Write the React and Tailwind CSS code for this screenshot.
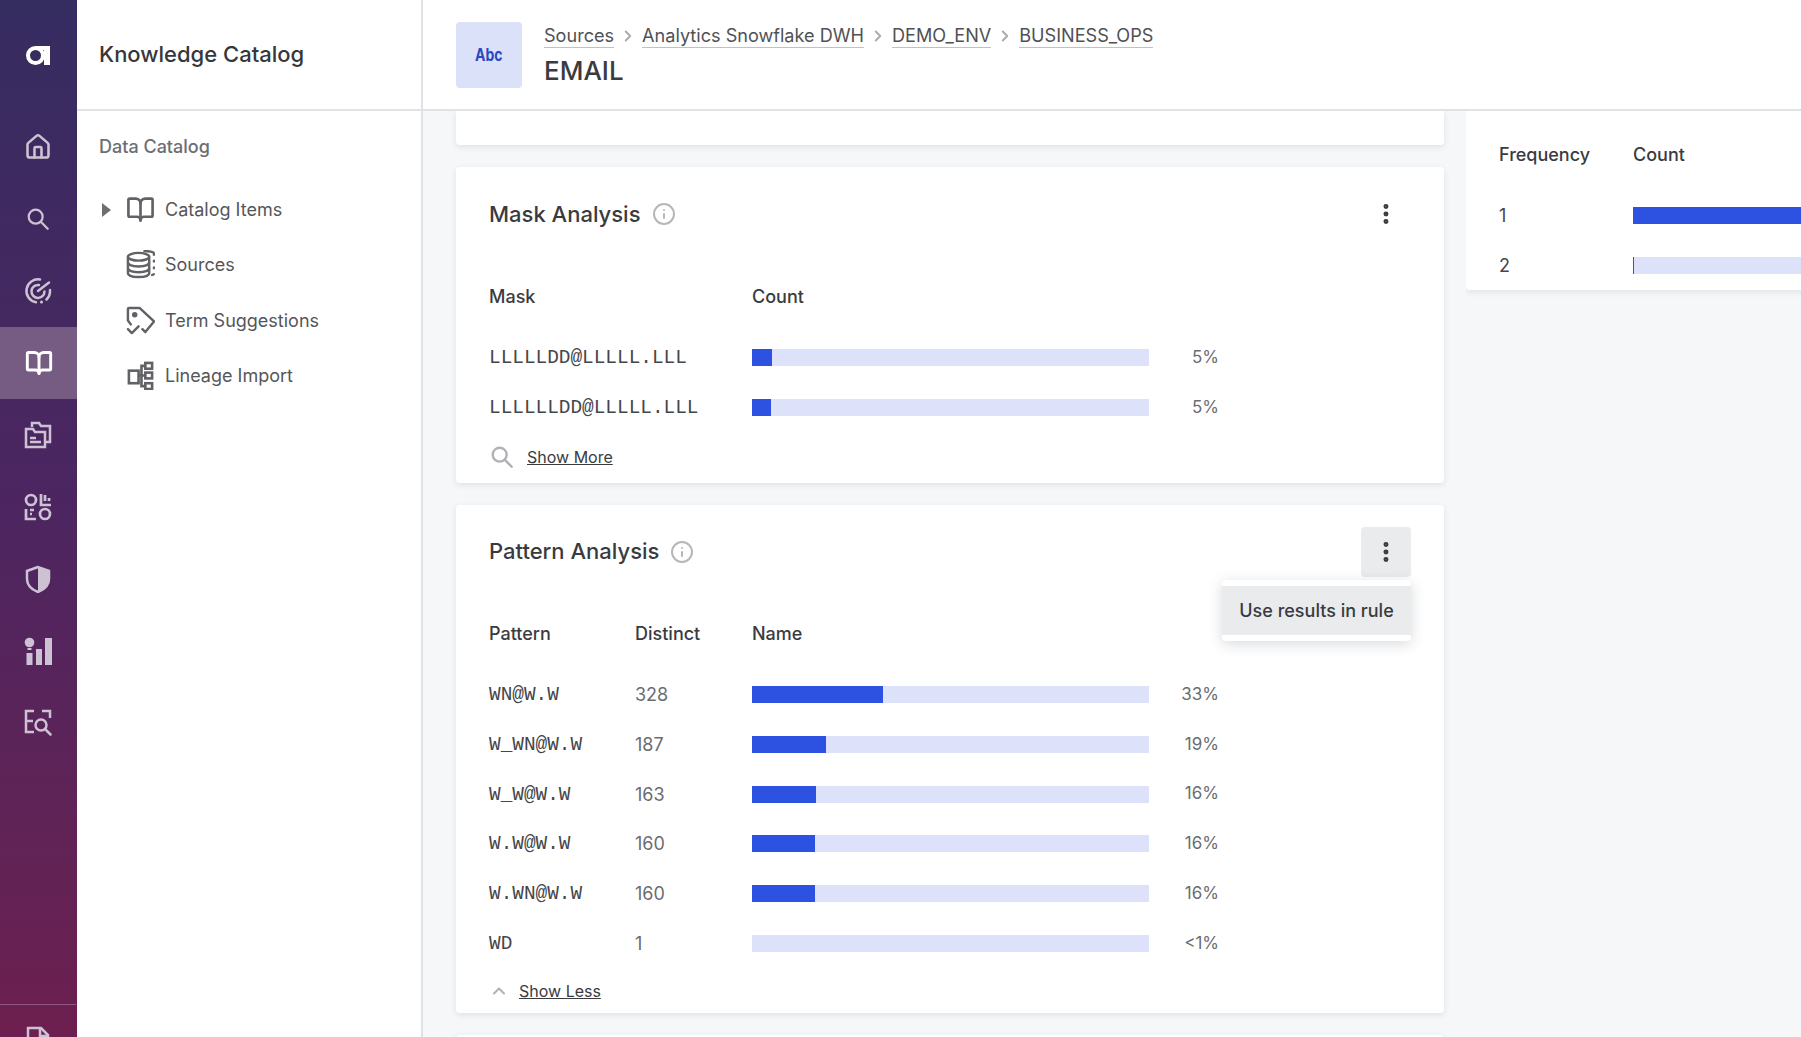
import React from 'react'
import { Home, BookOpen, ChevronRight, ChevronUp, EllipsisVertical, Info } from 'lucide-react'

const MONO = "font-['Liberation_Mono',monospace]"

function LogoIcon() {
  return (
    <svg width="24" height="19" viewBox="0 0 24 19" fill="none">
      <circle cx="9.500" cy="9.500" r="7.500" stroke="white" strokeWidth="4" />
      <path d="M9.500 0H24v19h-6V4H9.500z" fill="white" />
    </svg>
  )
}

function SearchIcon({ className, strokeWidth = 2.4 }) {
  return (
    <svg className={className} viewBox="0 0 28 28" fill="none" stroke="currentColor" strokeWidth={strokeWidth} strokeLinecap="round">
      <circle cx="11.500" cy="11.500" r="7.500" />
      <path d="m17 17 7.500 7.500" />
    </svg>
  )
}

function TargetIcon({ className }) {
  return (
    <svg className={className} viewBox="0 0 28 28" fill="none" stroke="currentColor" strokeWidth="2.500" strokeLinecap="round">
      <path d="M16 2.500A11.500 11.500 0 0 0 12 25.300" />
      <path d="M26 13c.300 3.500-1 7-3.500 9.500" />
      <path d="M15 8A6.500 6.500 0 1 0 20.500 14.500" />
      <path d="M14 14 25 5.500" />
      <circle cx="17.500" cy="25" r="1.500" fill="currentColor" stroke="none" />
    </svg>
  )
}

function FoldersIcon({ className }) {
  return (
    <svg className={className} viewBox="0 0 28 28" fill="none" stroke="currentColor" strokeWidth="2.500">
      <path d="M8 6V2h7l2 3h9v16h-5" />
      <path d="M2 8h7l2 3h10v15H2z" />
      <path d="M6 17h6M6 21h11" />
    </svg>
  )
}

function ShapesIcon({ className }) {
  return (
    <svg className={className} viewBox="0 0 28 28" fill="none" stroke="currentColor" strokeWidth="2.700">
      <circle cx="7" cy="7" r="5" />
      <circle cx="21" cy="21" r="5" />
      <path d="M17 1v11h10M21 2v6M25 5v3M2 16v10h10M6 17h4M6 21h2" />
    </svg>
  )
}

function ShieldIcon({ className }) {
  return (
    <svg className={className} viewBox="0 0 28 28" fill="none">
      <path d="M14 2 3 6v8c0 6 4.500 10.500 11 13 6.500-2.500 11-7 11-13V6z" stroke="currentColor" strokeWidth="2.500" />
      <path d="M14 2v25c6.500-2.500 11-7 11-13V6z" fill="currentColor" />
    </svg>
  )
}

function InsightIcon({ className }) {
  return (
    <svg className={className} viewBox="0 0 28 28" fill="currentColor">
      <circle cx="5.500" cy="5.500" r="4.800" />
      <path d="M3.500 11h4v2h-4zM2.500 16h6v12h-6zM12 12h6v16h-6zM21 1h7v27h-7z" />
    </svg>
  )
}

function EqSearchIcon({ className }) {
  return (
    <svg className={className} viewBox="0 0 28 28" fill="none" stroke="currentColor" strokeWidth="2.500">
      <path d="M10 2H2v21h8M2 12h7M18 2h8v7" />
      <circle cx="17" cy="16" r="5.500" />
      <path d="m21 20 5.500 5.500" strokeLinecap="round" />
    </svg>
  )
}

function DocIcon({ className }) {
  return (
    <svg className={className} viewBox="0 0 28 28" fill="none" stroke="currentColor" strokeWidth="2.500">
      <path d="M4 2h13l7 7v18H4z" />
      <path d="M16 2v8h8" />
    </svg>
  )
}

function StackIcon({ className }) {
  return (
    <svg className={className} viewBox="0 0 30 30" fill="none" stroke="currentColor" strokeWidth="2.500">
      <ellipse cx="13" cy="7" rx="11" ry="4" />
      <path d="M2 7v17c0 2.500 5 4 11 4s11-1.500 11-4V7" />
      <path d="M2 13c0 2.500 5 4 11 4s11-1.500 11-4M2 19c0 2.500 5 4 11 4s11-1.500 11-4" />
      <path d="M18 1c6 0 11 1 11 3v2M29 10v3M29 17v3M29 24c0 1-1 2-3 2" />
    </svg>
  )
}

function TagCheckIcon({ className }) {
  return (
    <svg className={className} viewBox="0 0 30 30" fill="none" stroke="currentColor" strokeWidth="2.500" strokeLinecap="round" strokeLinejoin="round">
      <path d="M5 19 2 15V3a1 1 0 0 1 1-1h11l15 14-9 11-3-3" />
      <circle cx="9" cy="9" r="1.600" fill="currentColor" />
      <path d="m2 24 4 4 7-7" />
    </svg>
  )
}

function LineageIcon({ className }) {
  return (
    <svg className={className} viewBox="0 0 30 30" fill="none" stroke="currentColor" strokeWidth="2.700">
      <rect x="3" y="10" width="10" height="13" />
      <rect x="20" y="2" width="7" height="6" />
      <rect x="20" y="12" width="7" height="6" />
      <rect x="20" y="23" width="7" height="6" />
      <path d="M13 15h7M20 5h-4v21h4" />
    </svg>
  )
}

const railItems = [
  { icon: Home, stroke: 2.2 },
  { icon: SearchIcon, small: true },
  { icon: TargetIcon },
  { icon: BookOpen, active: true, stroke: 2.5 },
  { icon: FoldersIcon },
  { icon: ShapesIcon },
  { icon: ShieldIcon },
  { icon: InsightIcon },
  { icon: EqSearchIcon },
]

const catalogItems = [
  { label: 'Catalog Items', icon: BookOpen, arrow: true },
  { label: 'Sources', icon: StackIcon },
  { label: 'Term Suggestions', icon: TagCheckIcon },
  { label: 'Lineage Import', icon: LineageIcon },
]

const crumbs = ['Sources', 'Analytics Snowflake DWH', 'DEMO_ENV', 'BUSINESS_OPS']

const masks = [
  { name: 'LLLLLDD@LLLLL.LLL', fill: 20, pct: '5%' },
  { name: 'LLLLLLDD@LLLLL.LLL', fill: 19, pct: '5%' },
]

const patterns = [
  { name: 'WN@W.W', distinct: 328, fill: 131, pct: '33%' },
  { name: 'W_WN@W.W', distinct: 187, fill: 74, pct: '19%' },
  { name: 'W_W@W.W', distinct: 163, fill: 64, pct: '16%' },
  { name: 'W.W@W.W', distinct: 160, fill: 63, pct: '16%' },
  { name: 'W.WN@W.W', distinct: 160, fill: 63, pct: '16%' },
  { name: 'WD', distinct: 1, fill: 0, pct: '<1%' },
]

function Bar({ fill }) {
  return (
    <div className="w-[397px] h-[17px] bg-[#dde1f9] shrink-0">
      <div className="h-full bg-[#2d52e1]" style={{ width: fill }} />
    </div>
  )
}

function CardTitle({ title, active }) {
  return (
    <div className="flex items-center justify-between h-[50px]">
      <div className="flex items-center gap-[11px]">
        <h2 className="text-[22px] font-medium text-[#3a3b3f]">{title}</h2>
        <Info className="w-[24px] h-[24px] text-[#b5b7ba]" strokeWidth={2} />
      </div>
      <button className={`w-[50px] h-[50px] rounded flex items-center justify-center ${active ? 'bg-[#e9ebed]' : ''}`}>
        <EllipsisVertical className="w-[26px] h-[26px] text-[#3a3b3f]" strokeWidth={2.6} />
      </button>
    </div>
  )
}

function MaskCard() {
  return (
    <section className="relative bg-white rounded shadow-[0_2px_6px_rgba(40,50,70,0.1)] px-[33px] pt-[22px]">
      <CardTitle title="Mask Analysis" />
      <div className="flex items-center h-[50px] mt-[32px] mb-[12px] text-[18px] font-medium text-[#3a3b3f]">
        <div className="w-[263px]">Mask</div>
        <div>Count</div>
      </div>
      {masks.map(m => (
        <div key={m.name} className="flex items-center h-[49.8px]">
          <div className={`w-[263px] pt-[2px] text-[19.400px] text-[#45464a] ${MONO}`}>{m.name}</div>
          <Bar fill={m.fill} />
          <div className="w-[70px] text-right text-[17px] text-[#6b6d71]">{m.pct}</div>
        </div>
      ))}
      <div className="flex items-center h-[50px] pb-[2px] gap-[12px] text-[16px] text-[#3a3b3f]">
        <SearchIcon className="w-[26px] h-[26px] text-[#b0b2b5]" strokeWidth={2.600} />
        <a className="underline">Show More</a>
      </div>
    </section>
  )
}

function PatternCard() {
  return (
    <section className="relative bg-white rounded shadow-[0_2px_6px_rgba(40,50,70,0.1)] px-[33px] pt-[22px]">
      <CardTitle title="Pattern Analysis" active />
      <div className="flex items-center h-[50px] mt-[32px] mb-[11px] text-[18px] font-medium text-[#3a3b3f]">
        <div className="w-[146px]">Pattern</div>
        <div className="w-[117px]">Distinct</div>
        <div>Name</div>
      </div>
      {patterns.map(p => (
        <div key={p.name} className="flex items-center h-[49.8px]">
          <div className={`w-[146px] pt-[2px] text-[19.400px] text-[#45464a] ${MONO}`}>{p.name}</div>
          <div className="w-[117px] text-[18px] text-[#6b6d71]">{p.distinct}</div>
          <Bar fill={p.fill} />
          <div className="w-[70px] text-right text-[17px] text-[#6b6d71]">{p.pct}</div>
        </div>
      ))}
      <div className="flex items-center h-[45px] gap-[10px] text-[16px] text-[#3a3b3f]">
        <ChevronUp className="w-[20px] h-[20px] text-[#b0b2b5]" strokeWidth={2.500} />
        <a className="underline">Show Less</a>
      </div>
      <div className="absolute left-[766px] top-[75px] w-[189px] h-[61px] py-[6px] bg-white rounded shadow-[0_3px_14px_rgba(40,50,70,0.18)]">
        <div className="h-[49px] bg-[#e9ebed] flex items-center justify-center text-[18px] font-medium text-[#3a3b3f]">
          Use results in rule
        </div>
      </div>
    </section>
  )
}

export default function App() {
  return (
    <div className="flex w-[1801px] h-[1037px] overflow-hidden bg-white font-['Inter',sans-serif]">
      {/* Nav rail */}
      <nav className="w-[77px] shrink-0 flex flex-col pr-[1px] bg-gradient-to-b from-[#352c60] via-[#4d2560] to-[#6d1f4f]">
        <div className="h-[111px] flex items-center justify-center">
          <LogoIcon />
        </div>
        {railItems.map((item, i) => {
          const Icon = item.icon
          return (
            <div key={i} className={`h-[72px] flex items-center justify-center ${item.active ? 'bg-[#765b82] text-white -mr-[1px]' : 'text-[#cdc2d3]'}`}>
              <Icon className={item.small ? 'w-[26px] h-[26px]' : 'w-[28px] h-[28px]'} strokeWidth={item.stroke} />
            </div>
          )
        })}
        <div className="mt-auto h-[33px] border-t border-[#8a5a80] flex justify-center pt-[21px] text-[#cdc2d3]">
          <DocIcon className="w-[28px] h-[28px] shrink-0" />
        </div>
      </nav>

      {/* Catalog sidebar */}
      <aside className="w-[346px] shrink-0 border-r-2 border-[#dfe3e8]">
        <div className="h-[111px] border-b-2 border-[#dfe3e8] pl-[22px] flex items-center">
          <h1 className="text-[22px] font-medium text-[#36373b]">Knowledge Catalog</h1>
        </div>
        <div className="pl-[22px] pt-[22px] text-[18px] font-medium text-[#6c6e72]">Data Catalog</div>
        <ul className="mt-[22px]">
          {catalogItems.map(c => {
            const Icon = c.icon
            return (
              <li key={c.label} className="flex items-center h-[55.3px] pl-[25px] text-[18px] text-[#55565a]">
                <div className="w-[24px]">
                  {c.arrow && <div className="w-0 h-0 border-y-[7px] border-y-transparent border-l-[9px] border-l-[#6d6f73]" />}
                </div>
                <Icon className="w-[29px] h-[29px] text-[#606266]" strokeWidth={2.200} />
                <span className="ml-[10px]">{c.label}</span>
              </li>
            )
          })}
        </ul>
      </aside>

      {/* Main */}
      <main className="flex-1 min-w-0 flex flex-col bg-[#f5f7f9]">
        <header className="h-[111px] shrink-0 bg-white border-b-2 border-[#dfe3e8] pl-[33px] flex items-center gap-[22px]">
          <div className="w-[66px] h-[66px] rounded bg-[#dce1fa] flex items-center justify-center text-[17px] font-bold text-[#2a49bf]">
            <span className="inline-block scale-x-[0.82] translate-y-[1px]">Abc</span>
          </div>
          <div className="mt-[2px]">
            <div className="flex items-center text-[18.100px] text-[#505155]">
              {crumbs.map((c, i) => (
                <React.Fragment key={c}>
                  {i > 0 && <ChevronRight className="w-[18px] h-[18px] mx-[5px] text-[#a9abae]" strokeWidth={2.500} />}
                  <span className="border-b border-[#bfc1c4] leading-[23px]">{c}</span>
                </React.Fragment>
              ))}
            </div>
            <div className="text-[26px] font-medium text-[#3a3b3f] leading-[34px] mt-[6px]">EMAIL</div>
          </div>
        </header>

        <div className="flex-1 min-h-0 overflow-hidden flex gap-[22px] pl-[33px]">
          <div className="w-[988px] shrink-0 flex flex-col gap-[22px]">
            <div className="h-[34px] shrink-0 bg-white rounded-b shadow-[0_2px_6px_rgba(40,50,70,0.1)]" />
            <MaskCard />
            <PatternCard />
            <div className="h-[40px] shrink-0 bg-white rounded shadow-[0_2px_6px_rgba(40,50,70,0.1)]" />
          </div>
          <div className="flex-1 min-w-0 overflow-hidden pb-[8px]">
            <div className="w-[600px] h-[179px] bg-white rounded-bl shadow-[0_2px_6px_rgba(40,50,70,0.1)] pl-[33px] pt-[18px]">
              <div className="flex items-center h-[50px] text-[18px] font-medium text-[#3a3b3f]">
                <div className="w-[134px]">Frequency</div>
                <div>Count</div>
              </div>
              <div className="flex items-center h-[49.8px] mt-[12px] text-[18px] text-[#45464a]">
                <div className="w-[134px]">1</div>
                <div className="w-[397px] h-[17px] bg-[#2d52e1]" />
              </div>
              <div className="flex items-center h-[49.8px] text-[18px] text-[#45464a]">
                <div className="w-[134px]">2</div>
                <div className="w-[397px] h-[17px] bg-[#dde1f9] border-l border-[#2d52e1]" />
              </div>
            </div>
          </div>
        </div>
      </main>
    </div>
  )
}
